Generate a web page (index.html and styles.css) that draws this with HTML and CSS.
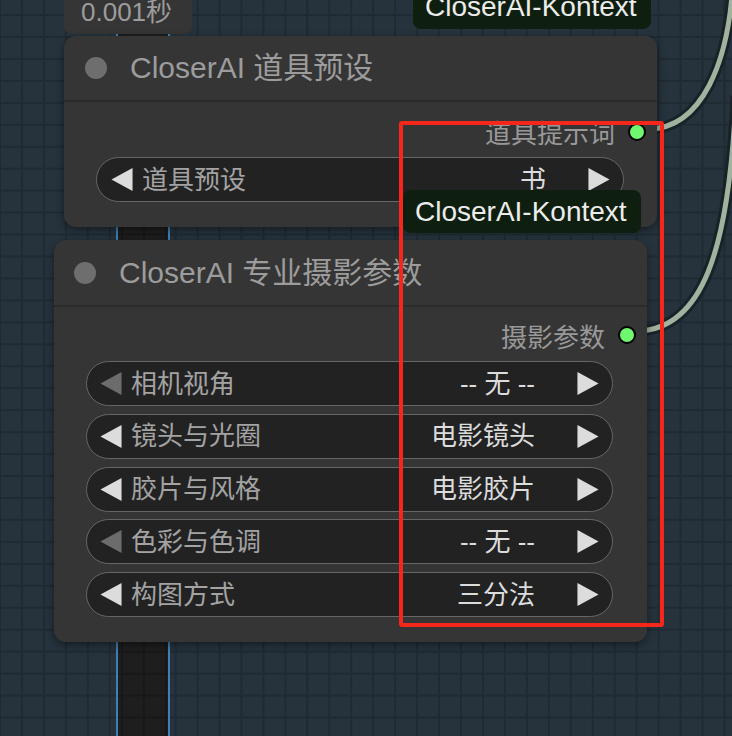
FILE: index.html
```html
<!DOCTYPE html>
<html lang="zh">
<head>
    <meta charset="UTF-8">
    <meta name="viewport" content="width=device-width, initial-scale=1.0">
    <title>CloserAI 节点</title>
    <link rel="stylesheet" href="styles.css">
</head>
<body>
    <div class="canvas">
        <!-- 组的边框条 -->
        <div class="group-strip"></div>

        <!-- 连线 -->
        <svg class="links" width="732" height="736" viewBox="0 0 732 736">
            <path class="link-edge" d="M 648 129 C 702 129, 729 62, 733 -20"/>
            <path class="link-core" d="M 648 129 C 702 129, 729 62, 733 -20"/>
            <path class="link-edge" d="M 638 331 C 702 329, 729 252, 736 96"/>
            <path class="link-core" d="M 638 331 C 702 329, 729 252, 736 96"/>
        </svg>

        <div class="timer">0.001秒</div>
        <div class="badge badge-top">CloserAI-Kontext</div>

        <!-- 道具预设 -->
        <div class="node node-props">
            <div class="node-head">
                <span class="node-dot"></span>
                <span class="node-title">CloserAI 道具预设</span>
            </div>
            <div class="node-body">
                <div class="node-output"><span>道具提示词</span><span class="slot"></span></div>
                <div class="combo">
                    <svg class="arrow" viewBox="0 0 22 24"><polygon points="22,0 22,24 0,12"/></svg>
                    <span class="combo-label">道具预设</span>
                    <span class="combo-value">书</span>
                    <svg class="arrow" viewBox="0 0 22 24"><polygon points="0,0 0,24 22,12"/></svg>
                </div>
            </div>
        </div>

        <div class="badge badge-mid">CloserAI-Kontext</div>

        <!-- 专业摄影参数 -->
        <div class="node node-photo">
            <div class="node-head">
                <span class="node-dot"></span>
                <span class="node-title">CloserAI 专业摄影参数</span>
            </div>
            <div class="node-body">
                <div class="node-output"><span>摄影参数</span><span class="slot"></span></div>
                <div class="combo-list">
                    <div class="combo">
                        <svg class="arrow dim" viewBox="0 0 22 24"><polygon points="22,0 22,24 0,12"/></svg>
                        <span class="combo-label">相机视角</span>
                        <span class="combo-value">-- 无 --</span>
                        <svg class="arrow" viewBox="0 0 22 24"><polygon points="0,0 0,24 22,12"/></svg>
                    </div>
                    <div class="combo">
                        <svg class="arrow" viewBox="0 0 22 24"><polygon points="22,0 22,24 0,12"/></svg>
                        <span class="combo-label">镜头与光圈</span>
                        <span class="combo-value">电影镜头</span>
                        <svg class="arrow" viewBox="0 0 22 24"><polygon points="0,0 0,24 22,12"/></svg>
                    </div>
                    <div class="combo">
                        <svg class="arrow" viewBox="0 0 22 24"><polygon points="22,0 22,24 0,12"/></svg>
                        <span class="combo-label">胶片与风格</span>
                        <span class="combo-value">电影胶片</span>
                        <svg class="arrow" viewBox="0 0 22 24"><polygon points="0,0 0,24 22,12"/></svg>
                    </div>
                    <div class="combo">
                        <svg class="arrow dim" viewBox="0 0 22 24"><polygon points="22,0 22,24 0,12"/></svg>
                        <span class="combo-label">色彩与色调</span>
                        <span class="combo-value">-- 无 --</span>
                        <svg class="arrow" viewBox="0 0 22 24"><polygon points="0,0 0,24 22,12"/></svg>
                    </div>
                    <div class="combo">
                        <svg class="arrow" viewBox="0 0 22 24"><polygon points="22,0 22,24 0,12"/></svg>
                        <span class="combo-label">构图方式</span>
                        <span class="combo-value">三分法</span>
                        <svg class="arrow" viewBox="0 0 22 24"><polygon points="0,0 0,24 22,12"/></svg>
                    </div>
                </div>
            </div>
        </div>

        <!-- 红色标注框 -->
        <div class="highlight"></div>
    </div>
</body>
</html>
```

FILE: styles.css
```css
body {
    margin: 0;
    padding: 0;
    background-color: #26333d;
    font-family: "Liberation Sans", "Noto Sans CJK SC", sans-serif;
    overflow: hidden;
}

/* 画布网格 */
.canvas {
    position: relative;
    width: 732px;
    height: 736px;
    overflow: hidden;
    background-color: #26333d;
    background-image:
        linear-gradient(to right, #1f2a32 2px, transparent 2px),
        linear-gradient(to bottom, #1f2a32 2px, transparent 2px);
    background-size: 21.96px 21.96px;
    background-position: -1px 14px;
}

.group-strip {
    position: absolute;
    left: 116px;
    top: 0;
    width: 50px;
    height: 736px;
    border-left: 2px solid #3f80b6;
    border-right: 2px solid #3f80b6;
    background-color: #1e1e1e;
    background-image:
        linear-gradient(to right, #181818 2px, transparent 2px),
        linear-gradient(to bottom, #181818 2px, transparent 2px);
    background-size: 21.96px 21.96px;
    background-position: -19px 14px;
}

/* 连线 */
.links {
    position: absolute;
    left: 0;
    top: 0;
}

.link-edge {
    fill: none;
    stroke: #192228;
    stroke-width: 11;
}

.link-core {
    fill: none;
    stroke: #a1b39f;
    stroke-width: 5;
}

.timer {
    position: absolute;
    left: 64px;
    top: 0;
    width: 111px;
    height: 34px;
    padding-left: 17px;
    background-color: #353535;
    border-radius: 0 0 8px 8px;
    color: #9c9c9c;
    font-size: 26px;
    line-height: 24px;
}

.badge {
    position: absolute;
    width: 214px;
    padding: 0 12px;
    background-color: #0e1f10;
    border-radius: 8px;
    color: #ececec;
    font-size: 28px;
    display: flex;
    align-items: center;
}

.badge-top {
    left: 413px;
    top: -15px;
    height: 44px;
}

.badge-mid {
    left: 403px;
    top: 190px;
    height: 43px;
    z-index: 3;
}

/* 节点 */
.node {
    position: absolute;
    width: 593px;
    background-color: #353535;
    border-radius: 12px;
    box-shadow: 0 3px 8px rgba(0, 0, 0, 0.45);
    z-index: 2;
}

.node-props {
    left: 64px;
    top: 36px;
}

.node-photo {
    left: 54px;
    top: 240px;
}

.node-head {
    display: flex;
    align-items: center;
    height: 64px;
    border-bottom: 2px solid #2b2b2b;
}

.node-photo .node-head {
    height: 65px;
}

.node-dot {
    width: 22px;
    height: 22px;
    border-radius: 50%;
    background-color: #6e6e6e;
    margin-left: 21px;
    margin-right: 23px;
}

.node-photo .node-dot {
    margin-left: 20px;
}

.node-title {
    color: #9c9c9c;
    font-size: 30px;
    line-height: 1;
}

.node-body {
    display: flex;
    flex-direction: column;
    padding: 11px 33px 25px 32px;
}

.node-photo .node-body {
    padding: 10px 34px 25px 32px;
}

.node-output {
    display: flex;
    align-items: center;
    justify-content: flex-end;
    height: 37px;
    margin-right: -22px;
    color: #999;
    font-size: 26px;
    margin-bottom: 7px;
}

.node-photo .node-output {
    height: 36px;
    margin-right: -23px;
    margin-bottom: 8px;
}

.slot {
    width: 14px;
    height: 14px;
    margin-left: 13px;
    border: 2px solid #000;
    border-radius: 50%;
    background-color: #6ff76f;
}

/* 下拉选择 */
.combo-list {
    display: flex;
    flex-direction: column;
    gap: 7.75px;
}

.combo {
    display: flex;
    align-items: center;
    height: 45px;
    padding: 0 13px;
    box-sizing: border-box;
    background-color: #222;
    border: 1.5px solid #666;
    border-radius: 23px;
    font-size: 26px;
    line-height: 1;
}

.node-props .combo {
    padding: 0 13px 0 14px;
}

.arrow {
    width: 22px;
    height: 23px;
    fill: #dcdcdc;
    flex: none;
}

.arrow.dim {
    fill: #6c6c6c;
}

.combo-label {
    margin-left: 9px;
    color: #a3a3a3;
    flex: 1;
}

.combo-value {
    margin-right: 42px;
    color: #dcdcdc;
}

/* 红色标注 */
.highlight {
    position: absolute;
    left: 399px;
    top: 121px;
    width: 257px;
    height: 498px;
    border: 4px solid #f5261a;
    border-radius: 3px;
    z-index: 5;
}
```
